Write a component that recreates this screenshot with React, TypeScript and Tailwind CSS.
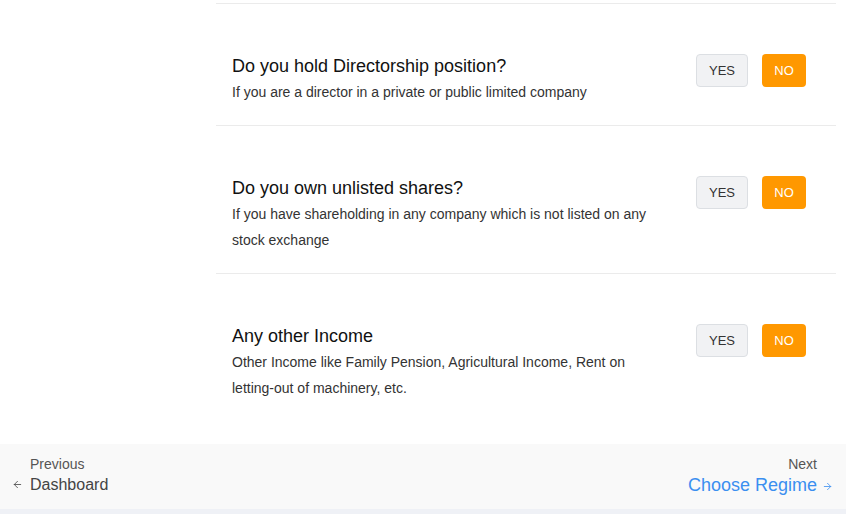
import { ArrowLeft, ArrowRight } from "lucide-react";

interface Question {
  title: string;
  hint: string;
}

const questions: Question[] = [
  {
    title: "Do you hold Directorship position?",
    hint: "If you are a director in a private or public limited company",
  },
  {
    title: "Do you own unlisted shares?",
    hint: "If you have shareholding in any company which is not listed on any stock exchange",
  },
  {
    title: "Any other Income",
    hint: "Other Income like Family Pension, Agricultural Income, Rent on letting-out of machinery, etc.",
  },
];

function QuestionRow({ q }: { q: Question }) {
  return (
    <div className="flex items-start justify-between border-t border-[#ebebeb] pl-4 pr-[30px] pt-[50px] pb-5">
      <div className="w-[430px]">
        <h3 className="text-[18px] leading-6 text-[#111]">{q.title}</h3>
        <p className="mt-[1px] text-[14px] leading-[26px] text-[#333]">{q.hint}</p>
      </div>
      <div className="flex gap-[14px]">
        <button className="h-[33px] w-[52px] rounded-[4px] border border-[#dcdfe3] bg-[#f1f2f4] text-[13px] text-[#333]">
          YES
        </button>
        <button className="h-[33px] w-[44px] rounded-[4px] bg-[#ff9800] text-[13px] text-white">
          NO
        </button>
      </div>
    </div>
  );
}

export default function App() {
  return (
    <div className="flex h-[514px] w-[846px] flex-col bg-white font-['Liberation_Sans',Arial,sans-serif]">
      <div className="flex flex-1 pt-[3px]">
        <div className="w-[216px]" />
        <div className="w-[620px]">
          {questions.map((q) => (
            <QuestionRow key={q.title} q={q} />
          ))}
        </div>
      </div>
      <div className="flex h-[65px] items-start justify-between bg-[#f9f9f9] pt-[12px]">
        <div className="flex flex-col pl-[30px]">
          <span className="text-[14px] leading-4 text-[#555]">Previous</span>
          <span className="relative mt-[3px] text-[16px] leading-5 text-[#444]">
            <ArrowLeft className="absolute -left-[18px] top-[4px] h-[11px] w-[11px]" strokeWidth={1.75} />
            Dashboard
          </span>
        </div>
        <div className="flex flex-col items-end pr-[13px]">
          <span className="mr-[16px] text-[14px] leading-4 text-[#555]">Next</span>
          <span className="mt-[3px] flex items-center gap-[5px] text-[18px] leading-5 text-[#3b8ff0]">
            Choose Regime
            <ArrowRight className="mt-[2px] h-[11px] w-[11px]" strokeWidth={1.75} />
          </span>
        </div>
      </div>
      <div className="h-[5px] bg-[#eff1f6]" />
    </div>
  );
}
